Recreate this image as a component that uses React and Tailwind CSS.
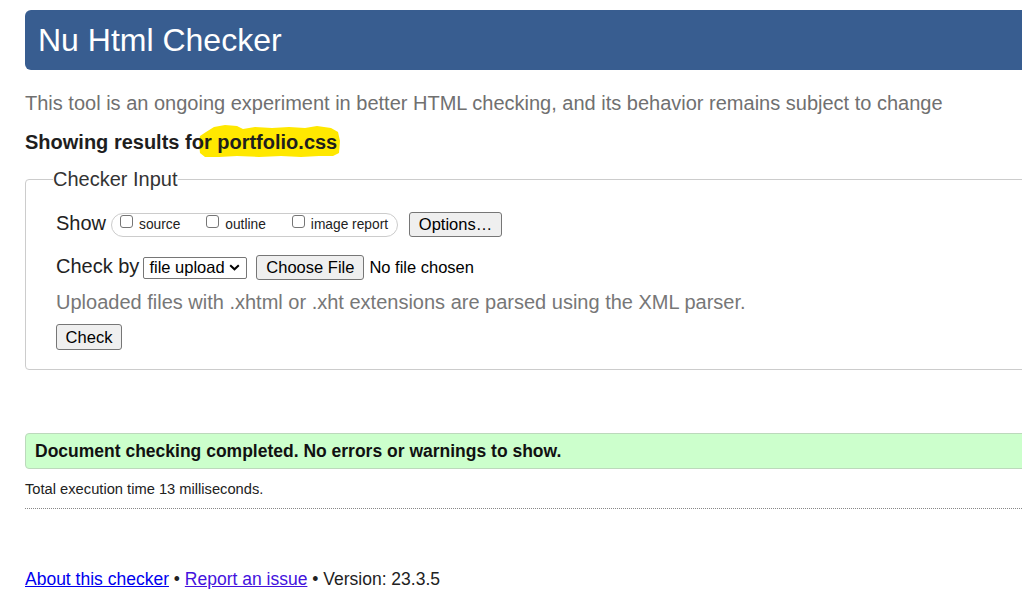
export default function App() {
  const Box = () => (
    <span className="block w-[13px] h-[13px] border border-[#767676] rounded-[3px] bg-white mb-[6px] mr-[6px] shrink-0" />
  );
  return (
    <div className="w-[1022px] h-[615px] overflow-hidden bg-white font-['Liberation_Sans',Arial,sans-serif] text-[#222]">
      <div className="w-[1140px] pl-[25px] pt-[10px]">
        <header className="h-[60px] bg-[#385d90] rounded-l-[6px] flex items-center pl-[13px]">
          <h1 className="text-[32px] leading-[37px] text-white">Nu Html Checker</h1>
        </header>

        <p className="mt-[22px] text-[20px] leading-[23px] text-[#707070]">
          This tool is an ongoing experiment in better HTML checking, and its behavior remains subject to change
        </p>

        <p className="relative mt-[16px] text-[20px] leading-[23px] font-bold text-[#1e1e1e]">
          <svg
            className="absolute left-[172px] top-[-8px] w-[146px] h-[36px]"
            viewBox="0 0 146 36"
          >
            <path
              d="M3 13 L9 9 L17 4 L28 2 L40 3 L46 6 L58 4 L75 5 L92 4 L108 5 L120 3 L134 5 L141 9 L143 18 L142 30 L136 33 L122 33 L104 34 L84 33 L62 34 L40 33 L22 34 L8 34 L3 30 L2 20 Z"
              fill="#ffe800"
            />
          </svg>
          <span className="relative">Showing results for portfolio.css</span>
        </p>

        <fieldset className="mt-[14px] border border-[#cccccc] rounded-[4px] pl-[30px] pb-[19px]">
          <legend className="p-0 ml-[-3px] text-[20px] leading-[23px] text-[#333]">Checker Input</legend>

          <div className="mt-[21px] flex items-center h-[25px]">
            <span className="text-[20px] leading-[23px] mb-[3px]">Show</span>
            <div className="ml-[5px] h-[24px] rounded-full border border-[#cccccc] flex items-center pl-[8px] pr-[9px]">
              <Box />
              <span className="text-[13.75px] leading-[16px] mr-[26px]">source</span>
              <Box />
              <span className="text-[13.75px] leading-[16px] mr-[26px]">outline</span>
              <Box />
              <span className="text-[13.75px] leading-[16px]">image report</span>
            </div>
            <button className="ml-[11px] w-[93px] h-[25px] bg-[#efefef] border border-[#767676] rounded-[3px] text-[16.5px] leading-[19px] text-black">
              Options…
            </button>
          </div>

          <div className="mt-[18px] flex items-center h-[25px]">
            <span className="text-[20px] leading-[23px] mb-[3px]">Check by</span>
            <div className="ml-[4px] w-[104px] h-[22px] border border-[#767676] rounded-[2px] flex items-center pl-[5px] pr-[6px] text-[16.5px] leading-[19px] text-black">
              <span>file upload</span>
              <svg className="ml-auto w-[11px] h-[7px]" viewBox="0 0 11 7">
                <path d="M1.2 1.2 L5.5 5.3 L9.8 1.2" fill="none" stroke="#000" strokeWidth="2" />
              </svg>
            </div>
            <button className="ml-[9px] w-[108px] h-[25px] bg-[#efefef] border border-[#767676] rounded-[3px] text-[16.5px] leading-[19px] text-black">
              Choose File
            </button>
            <span className="ml-[5px] text-[16.5px] leading-[19px] text-black">No file chosen</span>
          </div>

          <p className="mt-[11px] text-[20px] leading-[23px] text-[#777]">
            Uploaded files with .xhtml or .xht extensions are parsed using the XML parser.
          </p>

          <button className="mt-[10px] w-[66px] h-[26px] bg-[#efefef] border border-[#767676] rounded-[3px] text-[16.5px] leading-[19px] text-black">
            Check
          </button>
        </fieldset>

        <div className="mt-[63px] h-[36px] bg-[#ccffcc] border border-[#bcd9bc] rounded-[4px] flex items-center pl-[9px]">
          <p className="font-bold text-[17.5px] leading-[20px] text-[#111]">
            Document checking completed. No errors or warnings to show.
          </p>
        </div>

        <p className="mt-[12px] text-[14.7px] leading-[17px] text-[#222]">Total execution time 13 milliseconds.</p>

        <div className="mt-[10px] border-t border-dotted border-[#888]" />

        <p className="mt-[60px] text-[17.5px] leading-[20px] text-[#222]">
          <a href="#" className="text-[#0000ee] underline">About this checker</a>
          {" • "}
          <a href="#" className="text-[#4412dd] underline">Report an issue</a>
          {" • Version: 23.3.5"}
        </p>
      </div>
    </div>
  );
}
